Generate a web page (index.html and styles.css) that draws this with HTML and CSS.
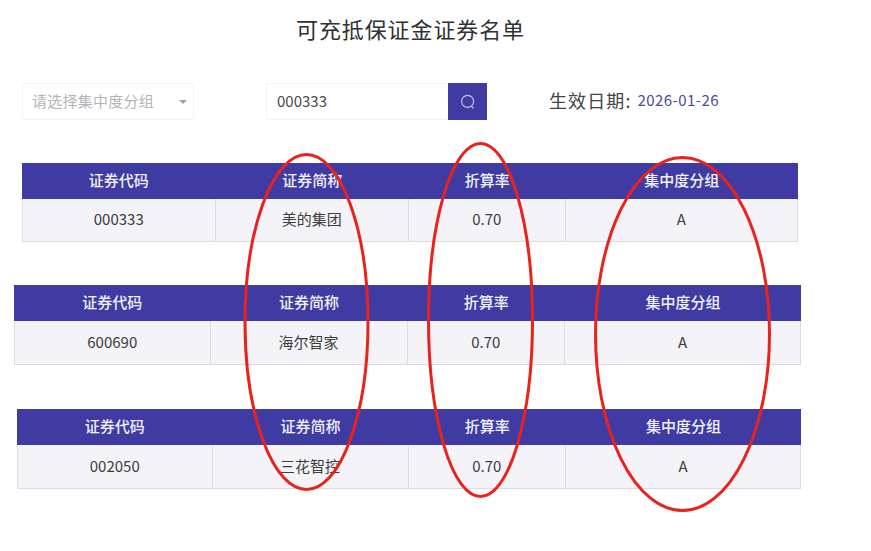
FILE: index.html
```html
<!DOCTYPE html>
<html lang="zh">
<head>
<meta charset="utf-8">
<title>可充抵保证金证券名单</title>
<link rel="stylesheet" href="styles.css">
</head>
<body>
<main class="page">
  <h1 class="title">可充抵保证金证券名单</h1>
  <div class="toolbar">
    <div class="select"><span>请选择集中度分组</span><i class="caret"></i></div>
    <div class="search">
      <div class="input">000333</div>
      <div class="btn">
        <svg width="16" height="16" viewBox="0 0 16 16" fill="none" stroke="#c9cbee" stroke-width="1.1"><circle cx="7.6" cy="7.4" r="6"/><path d="M11.4 12.2 13.6 14.6"/></svg>
      </div>
    </div>
    <div class="date"><span class="date-label">生效日期:</span><span class="date-value">2026-01-26</span></div>
  </div>

  <div class="sheet sheet-a">
    <div class="cell head">证券代码</div><div class="cell head">证券简称</div><div class="cell head">折算率</div><div class="cell head">集中度分组</div>
    <div class="cell">000333</div><div class="cell">美的集团</div><div class="cell">0.70</div><div class="cell">A</div>
  </div>
  <div class="sheet sheet-b">
    <div class="cell head">证券代码</div><div class="cell head">证券简称</div><div class="cell head">折算率</div><div class="cell head">集中度分组</div>
    <div class="cell">600690</div><div class="cell">海尔智家</div><div class="cell">0.70</div><div class="cell">A</div>
  </div>
  <div class="sheet sheet-c">
    <div class="cell head">证券代码</div><div class="cell head">证券简称</div><div class="cell head">折算率</div><div class="cell head">集中度分组</div>
    <div class="cell">002050</div><div class="cell">三花智控</div><div class="cell">0.70</div><div class="cell">A</div>
  </div>

  <svg class="marks" width="871" height="551" viewBox="0 0 871 551" fill="none" stroke="#e8231c" stroke-width="3">
    <ellipse cx="306.5" cy="322" rx="61.5" ry="167.5"/>
    <ellipse cx="480.5" cy="320" rx="52" ry="176.5"/>
    <ellipse cx="682.5" cy="334" rx="87" ry="176.5"/>
  </svg>
</main>
</body>
</html>
```
FILE: styles.css
```css
* { box-sizing: border-box; }
html, body { margin: 0; padding: 0; background: #fff; }
body {
  font-family: "Noto Sans CJK SC", "Noto Sans", sans-serif;
  color: #333;
  font-size: 15px;
}
.page { position: relative; width: 871px; height: 551px; overflow: hidden; padding-top: 12px; }
.title {
  margin: 0 0 0 296px;
  font-size: 22px;
  font-weight: 400;
  line-height: 32px;
  letter-spacing: 0.9px;
  color: #303133;
}
.toolbar { display: flex; align-items: flex-start; margin: 39px 0 0 22px; height: 38px; }
.select {
  width: 172px; height: 37px; border: 1px solid #f4f4f6; border-radius: 2px;
  display: flex; align-items: center; justify-content: space-between;
  padding: 0 6px 3px 9px; color: #b4b4b8; font-size: 15px;
  letter-spacing: 0.25px;
}
.caret { width: 0; height: 0; border: 4px solid transparent; border-top: 4px solid #a0a0a4; border-bottom: 0; margin-top: 3px; }
.search { display: flex; margin-left: 72px; }
.input {
  width: 182px; height: 37px; border: 1px solid #f4f4f6; border-right: 0;
  padding-left: 10px; line-height: 33px; color: #4a4a4d; font-size: 15px;
}
.btn { width: 39px; height: 37px; background: #3f3ba3; display: flex; align-items: center; justify-content: center; }
.date { display: flex; align-items: center; margin-left: 62px; height: 33px; }
.date-label { font-size: 18px; letter-spacing: 1.1px; color: #444; }
.date-value { font-size: 15px; color: #4c4aa3; margin-left: 6px; letter-spacing: 0.45px; }

.sheet { display: grid; grid-template-rows: 36px 43px; height: 79px; }
.sheet-a { grid-template-columns: 193.5px 193.5px 156.5px 232.5px; width: 776px; margin: 42px 0 0 22px; }
.sheet-b { grid-template-columns: 196.5px 197px 157.5px 236px; width: 787px; margin: 43px 0 0 14px; grid-template-rows: 36px 44px; height: 80px; }
.sheet-c { grid-template-columns: 195.5px 196px 157.5px 235px; width: 784px; margin: 44px 0 0 17px; grid-template-rows: 36px 44px; height: 80px; }

.cell {
  display: flex; align-items: center; justify-content: center;
  padding-bottom: 3px;
  background: #f3f3f8;
  border-right: 1px solid #dcdce0;
  border-bottom: 1px solid #dcdce0;
  color: #3d3d40;
  font-size: 15px;
}
.cell:nth-child(5) { border-left: 1px solid #dcdce0; }
.head {
  background: #3f3ba3; color: #f2f2fa; font-size: 15px; font-weight: 500;
  border: 0; padding-bottom: 3px;
}
.marks { position: absolute; left: 0; top: 0; pointer-events: none; }
```
